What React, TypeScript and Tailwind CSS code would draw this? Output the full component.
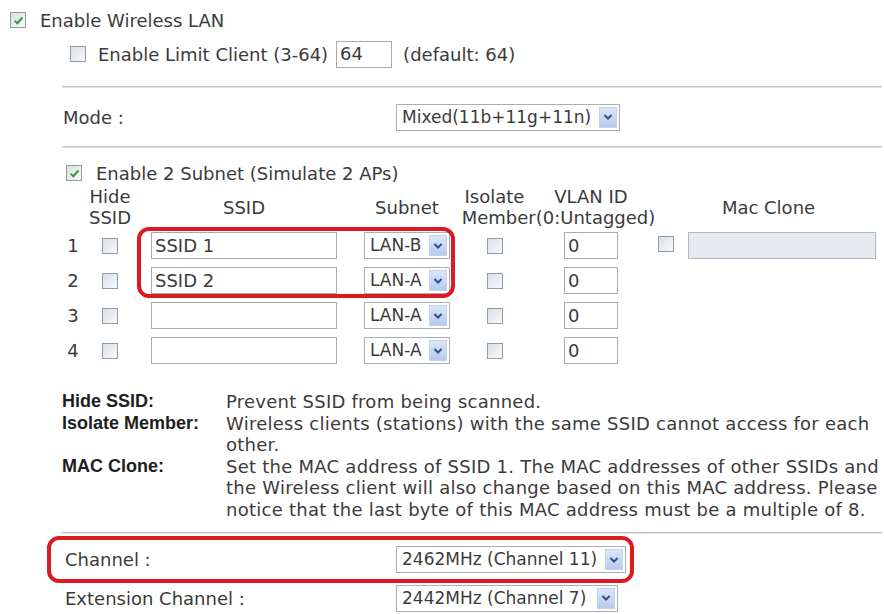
import type { ReactNode } from 'react';

// Classic router-style checkbox: grey bevelled box, green tick when on.
function Check({ checked = false }: { checked?: boolean }) {
  return (
    <span className="inline-flex h-[16px] w-[16px] shrink-0 items-center justify-center border border-[#8f9ca9] bg-linear-to-br from-[#d9dee4] to-[#fafafa]">
      {checked && (
        <svg viewBox="0 0 10 10" className="h-[11px] w-[11px]">
          <path d="M1.6 5.2 4 7.5 8.6 2.3" fill="none" stroke="#35a035" strokeWidth="1.9" />
        </svg>
      )}
    </span>
  );
}

function TextBox({ value = '', className = '' }: { value?: string; className?: string }) {
  return (
    <span
      className={`flex h-[27px] items-center border border-[#a3adb8] bg-white pl-[3px] leading-none whitespace-nowrap ${className}`}
    >
      {value}
    </span>
  );
}

function Select({ value, className = '' }: { value: string; className?: string }) {
  return (
    <span
      className={`flex h-[27px] items-center border border-[#a7b0ba] bg-white pl-[5px] pr-[2px] text-[17px] leading-none ${className}`}
    >
      <span className="flex-1 whitespace-nowrap">{value}</span>
      <span className="flex h-[21px] w-[18px] items-center justify-center border border-[#c5d2ea] bg-linear-to-b from-[#dbe6f8] to-[#b7caee]">
        <svg viewBox="0 0 10 8" className="h-[8px] w-[10px]">
          <path d="M1.5 2 5 5.6 8.5 2" fill="none" stroke="#2d4b8e" strokeWidth="2" />
        </svg>
      </span>
    </span>
  );
}

function Rule({ className = '' }: { className?: string }) {
  return <div className={`ml-[62px] mr-[2px] h-[2px] border-t border-[#c4c4c4] bg-[#e2e2e2] ${className}`} />;
}

function Cell({ children, className = '' }: { children?: ReactNode; className?: string }) {
  return <div className={`flex items-center justify-center ${className}`}>{children}</div>;
}

const rows = [
  { n: 1, ssid: 'SSID 1', subnet: 'LAN-B' },
  { n: 2, ssid: 'SSID 2', subnet: 'LAN-A' },
  { n: 3, ssid: '', subnet: 'LAN-A' },
  { n: 4, ssid: '', subnet: 'LAN-A' },
];

export default function App() {
  return (
    <div className="h-[614px] w-[884px] overflow-hidden bg-white font-['DejaVu_Sans',Verdana,sans-serif] text-[18px] text-[#3b3b3b]">
      <div className="flex h-[40px] items-center gap-[14px] pl-[10px]">
        <Check checked />
        <span>Enable Wireless LAN</span>
      </div>

      <div className="flex h-[28px] items-center pl-[70px]">
        <Check />
        <span className="ml-[12px]">Enable Limit Client (3-64)</span>
        <TextBox value="64" className="ml-[8px] w-[56px]" />
        <span className="ml-[11px]">(default: 64)</span>
      </div>

      <Rule className="mt-[18px]" />

      <div className="flex h-[58px] items-center pl-[63px]">
        <span className="w-[333px]">Mode :</span>
        <Select value="Mixed(11b+11g+11n)" className="w-[224px]" />
      </div>

      <Rule />

      <div className="mt-[12px] flex h-[26px] items-center pl-[66px]">
        <Check checked />
        <span className="ml-[14px]">Enable 2 Subnet (Simulate 2 APs)</span>
      </div>

      {/* subnet table */}
      <div className="relative ml-[62px] w-[820px]">
        <div className="grid grid-cols-[22px_52px_216px_110px_65px_128px_227px] leading-[21px]">
          <Cell className="h-[42px]" />
          <Cell className="h-[42px] text-center">
            Hide
            <br />
            SSID
          </Cell>
          <Cell className="h-[42px]">SSID</Cell>
          <Cell className="h-[42px]">Subnet</Cell>
          <div className="col-span-2 flex h-[42px] flex-col items-center">
            <div className="grid w-full grid-cols-[65px_128px] text-center">
              <span>Isolate</span>
              <span>VLAN ID</span>
            </div>
            <span className="whitespace-nowrap">Member(0:Untagged)</span>
          </div>
          <Cell className="h-[42px]">Mac Clone</Cell>

          {rows.map((r) => (
            <div key={r.n} className="contents">
              <Cell className="h-[35px]">{r.n}</Cell>
              <Cell className="h-[35px]">
                <Check />
              </Cell>
              <Cell className="h-[35px]">
                <TextBox value={r.ssid} className="h-[26px] w-[186px]" />
              </Cell>
              <Cell className="h-[35px]">
                <Select value={r.subnet} className="w-[86px]" />
              </Cell>
              <Cell className="h-[35px]">
                <Check />
              </Cell>
              <Cell className="h-[35px]">
                <TextBox value="0" className="w-[54px]" />
              </Cell>
              <Cell className="h-[35px] justify-start">
                {r.n === 1 && (
                  <>
                    <span className="ml-[3px]">
                      <Check />
                    </span>
                    <span className="ml-[14px] h-[27px] w-[188px] border border-[#b1b9c2] bg-[#e6e9ed]" />
                  </>
                )}
              </Cell>
            </div>
          ))}
        </div>

        <div className="pointer-events-none absolute top-[41px] left-[75px] h-[71px] w-[318px] rounded-[12px] border-[4px] border-[#dc1a22]" />
      </div>

      {/* legend */}
      <div className="mt-[23px] ml-[62px] grid grid-cols-[164px_1fr] leading-[21.5px] whitespace-nowrap">
        <span className="font-['Liberation_Sans',Arial,sans-serif] font-bold text-[#1e1e1e]">Hide SSID:</span>
        <span className="tracking-[0.25px]">Prevent SSID from being scanned.</span>
        <span className="font-['Liberation_Sans',Arial,sans-serif] font-bold text-[#1e1e1e]">Isolate Member:</span>
        <span className="tracking-[0.25px]">
          Wireless clients (stations) with the same SSID cannot access for each
          <br />
          other.
        </span>
        <span className="font-['Liberation_Sans',Arial,sans-serif] font-bold text-[#1e1e1e]">MAC Clone:</span>
        <span className="tracking-[0.25px]">
          Set the MAC address of SSID 1. The MAC addresses of other SSIDs and
          <br />
          the Wireless client will also change based on this MAC address. Please
          <br />
          notice that the last byte of this MAC address must be a multiple of 8.
        </span>
      </div>

      <Rule className="mt-[12px]" />

      <div className="mt-[2px] ml-[47px] flex h-[47px] w-[587px] items-center rounded-[12px] border-[4px] border-[#dc1a22] pl-[14px]">
        <span className="w-[331px]">Channel :</span>
        <Select value="2462MHz (Channel 11)" className="w-[230px]" />
      </div>

      <div className="flex h-[30px] items-center pl-[65px]">
        <span className="w-[331px]">Extension Channel :</span>
        <Select value="2442MHz (Channel 7)" className="w-[222px]" />
      </div>
    </div>
  );
}
